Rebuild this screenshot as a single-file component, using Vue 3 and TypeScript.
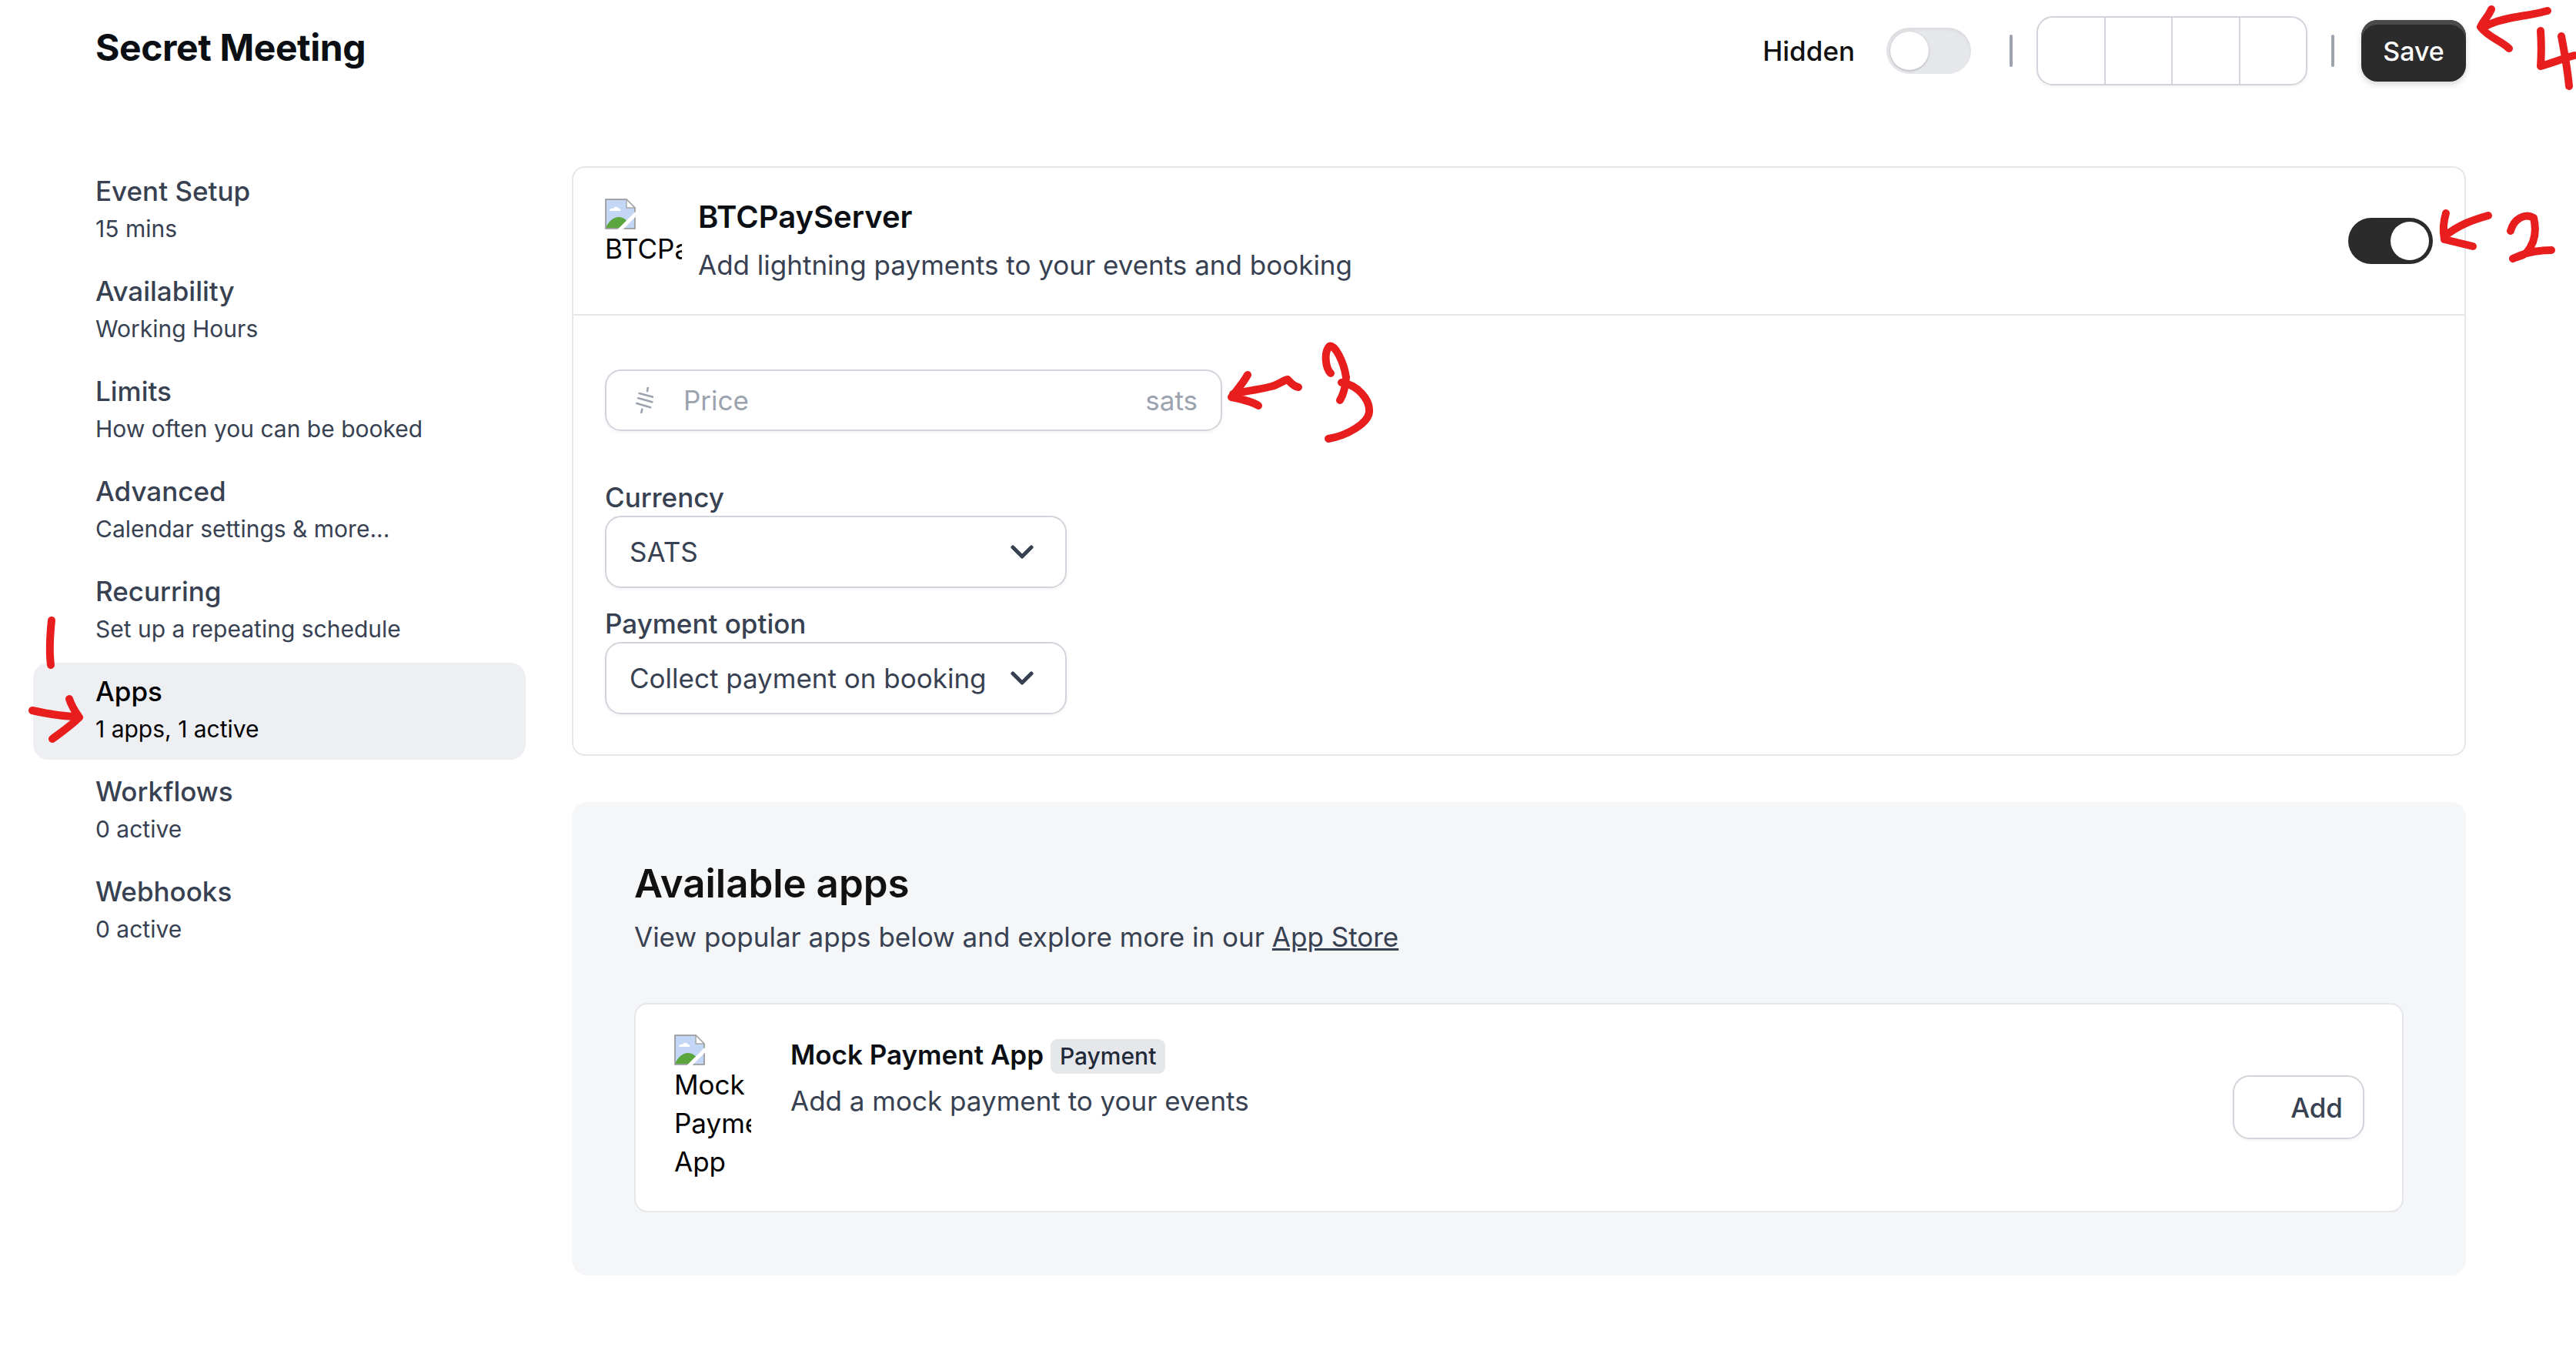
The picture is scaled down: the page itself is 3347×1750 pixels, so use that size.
<script setup lang="ts">
interface NavItem {
  title: string
  sub: string
  active?: boolean
}

const navItems: NavItem[] = [
  { title: 'Event Setup', sub: '15 mins' },
  { title: 'Availability', sub: 'Working Hours' },
  { title: 'Limits', sub: 'How often you can be booked' },
  { title: 'Advanced', sub: 'Calendar settings & more...' },
  { title: 'Recurring', sub: 'Set up a repeating schedule' },
  { title: 'Apps', sub: '1 apps, 1 active', active: true },
  { title: 'Workflows', sub: '0 active' },
  { title: 'Webhooks', sub: '0 active' },
]
</script>

<template>
  <div class="page">
    <header class="topbar">
      <h1 class="page-title">Secret Meeting</h1>
      <div class="actions">
        <span class="hidden-label">Hidden</span>
        <span class="switch-off"><span class="switch-knob" /></span>
        <span class="sep" />
        <div class="btn-group">
          <span v-for="i in 4" :key="i" class="btn-cell" />
        </div>
        <span class="sep" />
        <button class="save-btn">Save</button>
      </div>
    </header>

    <div class="shell">
      <nav class="sidebar">
        <div v-for="item in navItems" :key="item.title" class="nav-item" :class="{ active: item.active }">
          <div class="nav-title">{{ item.title }}</div>
          <div class="nav-sub">{{ item.sub }}</div>
        </div>
      </nav>

      <main class="main">
        <section class="app-card">
          <div class="app-head">
            <div class="alt-img">
              <svg class="broken" width="40" height="40" viewBox="0 0 40 40">
                <path d="M1 1H28L39 12V39H1Z" fill="#c3d6f5" stroke="#8f8f8f" stroke-width="1.5" />
                <path d="M28 1V12H39Z" fill="#fff" stroke="#a8a8a8" stroke-width="1.5" />
                <path d="M6 16c0-3 3-4 5-3 1-3 6-3 7 0 3 0 3 3 1 3z" fill="#fff" />
                <path d="M2 38V36C6 28 12 24 18 24c6 0 10 4 13 8l-7 6Z" fill="#5aa63c" />
                <path d="M18 42L41 19" stroke="#fff" stroke-width="5" />
              </svg>
              <div class="alt-text">BTCPayServer</div>
            </div>
            <div class="app-info">
              <div class="app-name">BTCPayServer</div>
              <div class="app-desc">Add lightning payments to your events and booking</div>
            </div>
            <span class="switch-on"><span class="switch-knob" /></span>
          </div>

          <div class="app-body">
            <div class="price-input">
              <svg class="sat-icon" width="24" height="34" viewBox="0 0 24 34" fill="none" stroke="#9ca3af" stroke-width="2.6" stroke-linecap="round">
                <path d="M5.7 8L23.3 12.7M4.3 14.3L22.3 19.3M2.3 21L20 26.3M16.7 1L16 5.3M9.3 28.7L8.3 33" />
              </svg>
              <span class="price-ph">Price</span>
              <span class="price-unit">sats</span>
            </div>

            <label class="field-label first">Currency</label>
            <div class="select">
              <span>SATS</span>
              <svg width="30" height="20" viewBox="0 0 30 20" fill="none" stroke="#374151" stroke-width="5" stroke-linecap="round" stroke-linejoin="round">
                <path d="M3 4l12 12L27 4" />
              </svg>
            </div>

            <label class="field-label">Payment option</label>
            <div class="select">
              <span>Collect payment on booking</span>
              <svg width="30" height="20" viewBox="0 0 30 20" fill="none" stroke="#374151" stroke-width="5" stroke-linecap="round" stroke-linejoin="round">
                <path d="M3 4l12 12L27 4" />
              </svg>
            </div>
          </div>
        </section>

        <section class="available">
          <h2 class="available-title">Available apps</h2>
          <p class="available-sub">View popular apps below and explore more in our <a class="store-link">App Store</a></p>

          <div class="mock-card">
            <div class="alt-img mock-img">
              <svg class="broken" width="40" height="40" viewBox="0 0 40 40">
                <path d="M1 1H28L39 12V39H1Z" fill="#c3d6f5" stroke="#8f8f8f" stroke-width="1.5" />
                <path d="M28 1V12H39Z" fill="#fff" stroke="#a8a8a8" stroke-width="1.5" />
                <path d="M6 16c0-3 3-4 5-3 1-3 6-3 7 0 3 0 3 3 1 3z" fill="#fff" />
                <path d="M2 38V36C6 28 12 24 18 24c6 0 10 4 13 8l-7 6Z" fill="#5aa63c" />
                <path d="M18 42L41 19" stroke="#fff" stroke-width="5" />
              </svg>
              <div class="alt-text">Mock Payment App</div>
            </div>
            <div class="mock-info">
              <div class="mock-name">Mock Payment App <span class="badge">Payment</span></div>
              <div class="app-desc">Add a mock payment to your events</div>
            </div>
            <button class="add-btn">Add</button>
          </div>
        </section>
      </main>
    </div>

    <!-- red marker annotations on top of the screenshot -->
    <svg class="marks" width="3347" height="1750" viewBox="0 0 3347 1750" fill="none" stroke="#e81e1e" stroke-width="10" stroke-linecap="round" stroke-linejoin="round">
      <path d="M67 806C65 825 64 848 66 864" />
      <path d="M42 923C60 927 85 931 102 931M90 908C93 918 98 925 103 932C92 943 80 951 68 960" />
      <path d="M3178 277C3174 290 3174 300 3176 311L3213 320M3176 307C3195 292 3212 286 3233 280" />
      <path d="M3262 300C3266 285 3280 276 3292 283C3296 300 3294 315 3283 328C3276 334 3268 334 3265 336C3280 328 3300 325 3315 325" />
      <path d="M1621 487C1615 498 1606 508 1600 516C1610 518 1628 522 1635 527M1602 512C1620 508 1636 506 1652 502C1660 500 1668 494 1673 493C1676 496 1680 502 1687 503" />
      <path d="M1729 485C1722 478 1720 458 1727 450C1734 446 1746 470 1749 490C1748 505 1744 515 1741 520M1743 497C1765 500 1780 520 1779 535C1778 550 1750 566 1726 570" />
      <path d="M3237 12C3234 20 3226 28 3223 35C3232 48 3250 53 3260 63M3226 36C3240 28 3250 26 3264 23C3280 20 3296 18 3310 14" />
      <path d="M3301 40C3302 55 3302 72 3301 86C3315 82 3330 76 3345 72M3328 47C3332 68 3336 90 3338 112" />
    </svg>
  </div>
</template>

<style>
body {
  background: #fff;
}
</style>

<style scoped>
.page {
  position: relative;
  width: 3347px;
  height: 1750px;
  overflow: hidden;
  box-sizing: border-box;
  padding: 0 143px 0 43px;
  font-family: Inter, "Liberation Sans", sans-serif;
  font-size: 35px;
  color: #374151;
}

.topbar {
  display: flex;
  align-items: center;
  justify-content: space-between;
  height: 132px;
  padding-left: 81px;
}

.page-title {
  margin: 0 0 10px;
  font-size: 48px;
  font-weight: 700;
  letter-spacing: -0.4px;
  color: #0b0f13;
}

.actions {
  display: flex;
  align-items: center;
}

.hidden-label {
  color: #111;
  font-weight: 500;
  margin-right: 41px;
}

.switch-off,
.switch-on {
  display: flex;
  align-items: center;
  width: 110px;
  height: 60px;
  box-sizing: border-box;
  padding: 5px;
  border-radius: 30px;
}

.switch-off {
  background: #e5e7eb;
  box-shadow: inset 0 3px 4px rgba(0, 0, 0, 0.05);
}

.switch-on {
  background: #2b2b2b;
  justify-content: flex-end;
}

.switch-knob {
  width: 50px;
  height: 50px;
  border-radius: 50%;
  background: #fff;
}

.switch-off .switch-knob {
  box-shadow: 0 1px 3px rgba(0, 0, 0, 0.25);
}

.sep {
  width: 4px;
  height: 42px;
  margin: 0 31px;
  border-radius: 2px;
  background: #9ca3af;
}

.switch-off + .sep {
  margin-left: 50px;
}

.btn-group + .sep {
  margin-right: 35px;
}

.btn-group {
  display: flex;
  width: 352px;
  height: 90px;
  box-sizing: border-box;
  border: 2px solid #d1d5db;
  border-radius: 21px;
  box-shadow: 0 2px 4px rgba(0, 0, 0, 0.05);
}

.btn-cell {
  flex: 1;
  border-left: 2px solid #d1d5db;
}

.btn-cell:first-child {
  border-left: none;
}

.save-btn {
  width: 136px;
  height: 80px;
  padding: 0;
  border: none;
  border-radius: 21px;
  background: #2b2b2b;
  box-shadow: inset 0 6px 0 #4a4a4a, 0 4px 8px rgba(0, 0, 0, 0.15);
  color: #fff;
  font-family: inherit;
  font-size: 34px;
  font-weight: 500;
}

.shell {
  display: flex;
  gap: 60px;
  margin-top: 79px;
}

.sidebar {
  display: flex;
  flex-direction: column;
  gap: 4px;
  width: 640px;
  flex-shrink: 0;
}

.nav-item {
  display: flex;
  flex-direction: column;
  justify-content: center;
  height: 126px;
  box-sizing: border-box;
  padding: 0 0 3px 81px;
  border-radius: 20px;
}

.nav-item.active {
  background: #eeeff2;
  color: #000;
}

.nav-title {
  margin-bottom: 3px;
  font-weight: 500;
  line-height: 46px;
}

.nav-sub {
  font-size: 30px;
  line-height: 46px;
}

.main {
  flex: 1;
  padding-top: 5px;
}

.app-card {
  border: 2px solid #e5e7eb;
  border-radius: 17px;
}

.app-head {
  display: flex;
  height: 192px;
  box-sizing: border-box;
  align-items: center;
  padding: 0 41px;
  border-bottom: 2px solid #e5e7eb;
}

.alt-img {
  width: 100px;
  overflow: hidden;
  color: #000;
  flex-shrink: 0;
}

.broken {
  display: block;
}

.alt-text {
  line-height: 50px;
  white-space: nowrap;
}

.app-head .alt-img {
  align-self: flex-start;
  margin-top: 40px;
  height: 100px;
}

.app-info {
  flex: 1;
  margin-left: 21px;
}

.app-name {
  font-size: 40px;
  font-weight: 600;
  color: #0b0f13;
  line-height: 62px;
}

.app-desc {
  line-height: 62px;
}

.app-body {
  padding: 70px 41px 52px;
}

.price-input {
  display: flex;
  align-items: center;
  width: 802px;
  height: 80px;
  box-sizing: border-box;
  padding: 0 30px;
  border: 2px solid #d1d5db;
  border-radius: 21px;
  box-shadow: 0 2px 4px rgba(0, 0, 0, 0.05);
  color: #9ca3af;
}

.sat-icon {
  margin-left: 7px;
}

.price-ph {
  margin-left: 39px;
  flex: 1;
}

.field-label {
  display: block;
  margin-top: 24px;
  line-height: 44px;
  font-weight: 500;
}

.field-label.first {
  margin-top: 64px;
}

.select {
  display: flex;
  align-items: center;
  justify-content: space-between;
  width: 600px;
  height: 94px;
  box-sizing: border-box;
  margin-top: 2px;
  padding: 0 41px 0 30px;
  border: 2px solid #d1d5db;
  border-radius: 21px;
  box-shadow: 0 2px 4px rgba(0, 0, 0, 0.05);
}

.available {
  margin-top: 60px;
  padding: 76px 81px 82px;
  border-radius: 20px;
  background: #f5f6f8;
}

.available-title {
  margin: 0;
  font-size: 51px;
  font-weight: 600;
  line-height: 60px;
  color: #111;
}

.available-sub {
  margin: 14px 0 0;
  line-height: 50px;
}

.store-link {
  text-decoration: underline;
}

.mock-card {
  display: flex;
  align-items: flex-start;
  height: 272px;
  box-sizing: border-box;
  margin-top: 61px;
  padding: 0 49px 0 50px;
  border: 2px solid #e5e7eb;
  border-radius: 17px;
  background: #fff;
}

.mock-img {
  margin-top: 39px;
}

.mock-img .alt-text {
  white-space: normal;
  width: 160px;
}

.mock-info {
  flex: 1;
  margin-left: 51px;
  margin-top: 35px;
}

.mock-info .app-desc {
  line-height: 60px;
}

.mock-name {
  font-weight: 600;
  line-height: 60px;
  color: #0b0f13;
}

.badge {
  display: inline-block;
  padding: 0 12px;
  border-radius: 9px;
  background: #e5e7eb;
  font-size: 30px;
  font-weight: 500;
  line-height: 45px;
  color: #1f2937;
}

.add-btn {
  width: 171px;
  height: 83px;
  margin-top: 92px;
  padding: 0 26px 0 0;
  border: 2px solid #d1d5db;
  border-radius: 22px;
  background: #fff;
  box-shadow: 0 2px 4px rgba(0, 0, 0, 0.05);
  color: #374151;
  font-family: inherit;
  font-size: 35px;
  font-weight: 500;
  text-align: right;
}

.marks {
  position: absolute;
  left: 0;
  top: 0;
  pointer-events: none;
}
</style>
